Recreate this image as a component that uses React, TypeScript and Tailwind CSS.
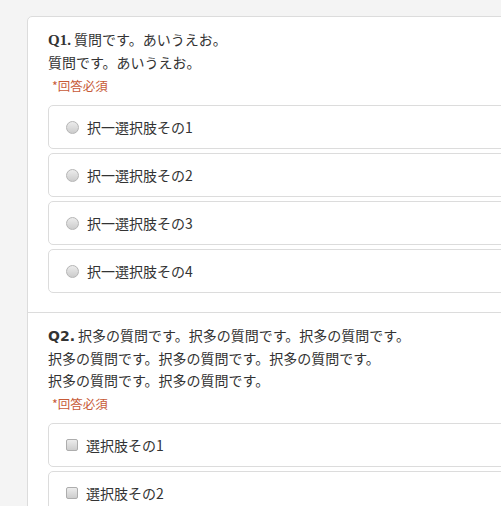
import React from 'react';

const jp = "font-['Noto_Sans_CJK_JP','Noto_Sans',sans-serif]";

type Opt = { label: string };

const Radio = () => (
    <span className="block w-[13px] h-[13px] rounded-full border border-[#b5b5b5] bg-gradient-to-b from-[#ececec] to-[#cccccc] shrink-0" />
);

const Check = () => (
    <span className="block w-3 h-3 rounded-[2px] border border-[#adadad] bg-gradient-to-b from-[#ececec] to-[#cdcdcd] shrink-0" />
);

const Options = ({ items, type }: { items: Opt[]; type: 'radio' | 'check' }) => (
    <ul className="flex flex-col gap-1 mt-[10px]">
        {items.map((o) => (
            <li key={o.label} className="flex items-center h-[44px] pl-[17px] gap-[8px] border border-[#dcdcdc] rounded-[5px] bg-white">
                {type === 'radio' ? <Radio /> : <Check />}
                <span className="text-[14px] leading-[22px] text-[#333]">{o.label}</span>
            </li>
        ))}
    </ul>
);

const Required = () => (
    <p className="mt-1 ml-1 text-[12.5px] leading-[18px] text-[#c75a37]">*回答必須</p>
);

export default function App() {
    const q1 = [1, 2, 3, 4].map((n) => ({ label: `択一選択肢その${n}` }));
    const q2 = [1, 2, 3].map((n) => ({ label: `選択肢その${n}` }));

    return (
        <div className={`w-[501px] h-[506px] overflow-hidden bg-[#f4f4f4] ${jp}`}>
            <div className="ml-[27px] mt-4 w-[560px] bg-white border border-[#dcdcdc] rounded-tl-[5px]">
                {/* Q1 */}
                <section className="pt-[11px] pb-[19px] px-5 border-b border-[#dcdcdc]">
                    <p className="text-[14px] leading-[22px] text-[#333]">
                        <b className="font-['Liberation_Serif',serif] text-[15px]">Q1.</b> 質問です。あいうえお。
                        <br />
                        質問です。あいうえお。
                    </p>
                    <Required />
                    <Options items={q1} type="radio" />
                </section>
                {/* Q2 */}
                <section className="pt-[11px] pb-5 px-5">
                    <p className="text-[14px] leading-[22px] text-[#333]">
                        <b className="font-['DejaVu_Sans',sans-serif] text-[14px]">Q2.</b> 択多の質問です。択多の質問です。択多の質問です。
                        <br />
                        択多の質問です。択多の質問です。択多の質問です。
                        <br />
                        択多の質問です。択多の質問です。
                    </p>
                    <Required />
                    <Options items={q2} type="check" />
                </section>
            </div>
        </div>
    );
}
